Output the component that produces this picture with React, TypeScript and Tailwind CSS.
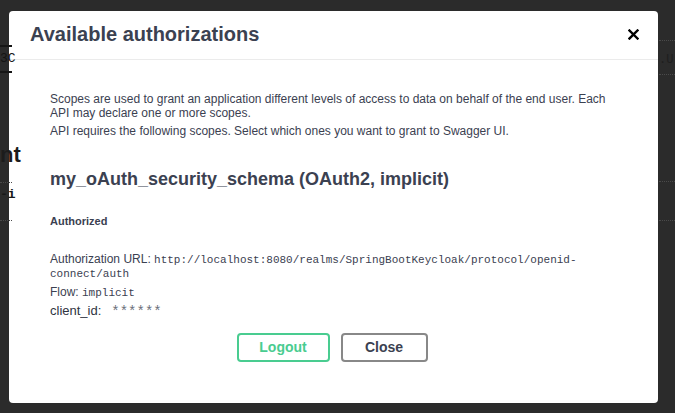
import React from 'react';

export default function App() {
  return (
    <div className="relative w-[675px] h-[413px] overflow-hidden bg-[#2b2b2b] font-['Liberation_Sans',Arial,sans-serif]">
      {/* faint page behind the overlay */}
      <div className="absolute left-0 top-[45px] w-[12px] h-[28px] border-y-2 border-[#161616] text-[#141414] text-[13px] leading-[24px] font-['Liberation_Mono',monospace]">
        3C
      </div>
      <div className="absolute left-0 top-[144px] text-[#1c1c1c] text-[22px] font-bold leading-none">nt</div>
      <div className="absolute left-0 top-[182px] w-[12px] border-t border-dotted border-[#4a4a4a]" />
      <div className="absolute left-0 top-[188px] text-[#181818] text-[13px] leading-none font-bold font-['Liberation_Mono',monospace]">-i</div>
      <div className="absolute left-0 top-[220px] w-[12px] border-t border-dotted border-[#4a4a4a]" />
      <div className="absolute right-0 top-[40px] w-[16px] border-t border-dotted border-[#4a4a4a]" />
      <div className="absolute right-0 top-[54px] w-[16px] text-[#1e1e1e] text-[12px] leading-none font-['Liberation_Mono',monospace]">.U</div>
      <div className="absolute right-0 top-[74px] w-[16px] border-t border-dotted border-[#4a4a4a]" />
      <div className="absolute right-0 top-[181px] w-[16px] border-t border-dotted border-[#4a4a4a]" />
      <div className="absolute right-0 top-[220px] w-[16px] border-t border-dotted border-[#4a4a4a]" />

      <div className="flex flex-col pt-[11px] pl-[9px]">
        <div className="w-[649px] h-[392px] bg-white rounded-[4px] flex flex-col text-[#3b4151]">
          <div className="h-[49px] shrink-0 flex items-center justify-between pl-[21px] pr-[15px] border-b border-[#ebebeb]">
            <h3 className="text-[20px] font-bold leading-none -mt-[2px]">Available authorizations</h3>
            <button className="w-[20px] h-[20px] flex items-center justify-center -mt-[2px]">
              <svg width="11" height="11" viewBox="0 0 11 11">
                <path d="M1.5 1.5 L9.5 9.5 M9.5 1.5 L1.5 9.5" stroke="#000" strokeWidth="2.4" strokeLinecap="square" />
              </svg>
            </button>
          </div>

          <div className="flex flex-col pl-[41px] pr-[36px] pt-[32px]">
            <div className="text-[12px] leading-[14px]">
              <p>
                Scopes are used to grant an application different levels of access to data on behalf of the end user. Each
                API may declare one or more scopes.
              </p>
              <p className="mt-[4px]">API requires the following scopes. Select which ones you want to grant to Swagger UI.</p>
            </div>

            <h4 className="mt-[30px] text-[18px] font-bold leading-[22px]">
              my_oAuth_security_schema (OAuth2, implicit)
            </h4>

            <h6 className="mt-[25px] text-[11px] font-bold leading-[12px]">Authorized</h6>

            <div className="mt-[26px] text-[12px] leading-[13px]">
              <p>
                Authorization URL:{' '}
                <code className="font-['Liberation_Mono',monospace] text-[11px] leading-[13px]">
                  http://localhost:8080/realms/SpringBootKeycloak/protocol/openid-connect/auth
                </code>
              </p>
              <p className="mt-[5px]">
                Flow: <code className="font-['Liberation_Mono',monospace] text-[11px] leading-[13px]">implicit</code>
              </p>
            </div>

            <div className="mt-[3px] flex items-start text-[13px] leading-[16px]">
              <span className="text-[#2f3441]">client_id:</span>
              <span className="ml-[10px] mt-[1px] font-['Liberation_Mono',monospace] text-[14px] leading-[16px] text-[#6b6f7a]">******</span>
            </div>

            <div className="mt-[13px] flex justify-center gap-[11px] pr-[8px]">
              <button className="w-[93px] h-[29px] rounded-[4px] border-2 border-[#49cc90] text-[#49cc90] text-[14px] font-bold">
                Logout
              </button>
              <button className="w-[87px] h-[29px] rounded-[4px] border-2 border-[#888] text-[#3b4151] text-[14px] font-bold">
                Close
              </button>
            </div>
          </div>
        </div>
      </div>
    </div>
  );
}
